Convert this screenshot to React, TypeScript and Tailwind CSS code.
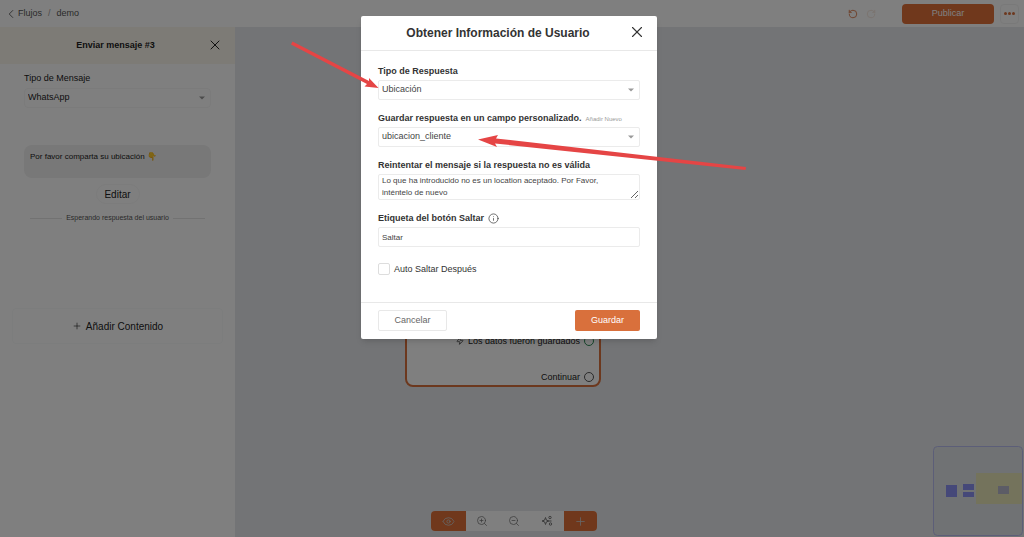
import { useState } from "react";
import { ChevronLeft, Eye, Info, Plus, RotateCcw, RotateCw, X, Zap, ZoomIn, ZoomOut } from "lucide-react";

function Caret() {
  return (
    <svg viewBox="0 0 6 4" className="pointer-events-none absolute right-1.5 top-2 h-1 w-1.5 fill-[#999]">
      <path d="M0 0.5h6L3 3.5z" />
    </svg>
  );
}

function ArrangeIcon() {
  return (
    <svg viewBox="0 0 12 12" className="size-3 fill-none stroke-current">
      <path d="M4.500 2.500L5.400 5.100L8 6L5.400 6.900L4.500 9.500L3.600 6.900L1 6L3.600 5.100Z" strokeLinejoin="round" />
      <circle cx="9" cy="2.500" r="1.200" />
      <circle cx="9.500" cy="9" r="1.200" />
      <path d="M8 6h2.500" />
    </svg>
  );
}

function Header() {
  return (
    <header className="flex h-[27px] shrink-0 items-center justify-between bg-white pl-1 pr-[5px]">
      <nav className="flex items-center gap-1.5 text-[9px] text-[#555]">
        <a href="#flujos" className="flex items-center">
          <ChevronLeft size={14} strokeWidth={1.5} />
          Flujos
        </a>
        <span className="text-[#999]">/</span>
        <a href="#demo">demo</a>
      </nav>
      <div className="flex items-center">
        <button aria-label="Deshacer" className="text-[#d9703c]">
          <RotateCcw size={10} />
        </button>
        <button aria-label="Rehacer" className="ml-2 mr-[26px] text-[#f3e3d8]" disabled>
          <RotateCw size={10} />
        </button>
        <button className="h-5 w-[92px] rounded-sm bg-[#e07038] text-[9px] text-white">Publicar</button>
        <button aria-label="Más" className="ml-1.5 flex h-5 w-[19px] items-center justify-center gap-px rounded-sm border border-[#f2f2f2]">
          <span className="size-[3px] rounded-full bg-[#d9703c]" />
          <span className="size-[3px] rounded-full bg-[#d9703c]" />
          <span className="size-[3px] rounded-full bg-[#d9703c]" />
        </button>
      </div>
    </header>
  );
}

function Sidebar() {
  return (
    <aside className="flex w-[235px] shrink-0 flex-col bg-white text-[#222]">
      <div className="relative flex h-[37px] items-center justify-center bg-[#faf6ec] pr-1">
        <h2 className="text-[9px] font-bold">Enviar mensaje #3</h2>
        <button aria-label="Cerrar panel" className="absolute right-3 top-2.5">
          <X size={16} strokeWidth={1.5} />
        </button>
      </div>
      <div className="px-6 pt-1.5">
        <label htmlFor="channel" className="block text-[9px] leading-4">
          Tipo de Mensaje
        </label>
        <div className="relative mt-0.5">
          <select id="channel" className="block h-5 w-full appearance-none rounded-sm border border-[#f6f6f6] px-[3px] text-[9px]">
            <option>WhatsApp</option>
          </select>
          <Caret />
        </div>
        <div className="mt-[37px] h-[33px] rounded-lg bg-[#f0f0f0] px-1.5 py-1 text-[8px] leading-4">
          Por favor comparta su ubicación <span>👇</span>
        </div>
        <button className="mx-auto mt-1.5 block h-5 w-11 rounded-full border border-[#f8f8f8] text-[10px]">Editar</button>
        <div className="mt-2 flex items-center justify-center gap-1 text-[7px] leading-3 text-[#555]">
          <span className="h-px w-8 bg-[#e4e4e4]" />
          Esperando respuesta del usuario
          <span className="h-px w-8 bg-[#e4e4e4]" />
        </div>
      </div>
      <button className="mx-3 mt-[84px] flex h-9 items-center justify-center gap-1 rounded border border-[#f9fbfb] text-[10px]">
        <Plus size={10} strokeWidth={1.5} />
        Añadir Contenido
      </button>
    </aside>
  );
}

function Canvas() {
  return (
    <main className="relative flex-1 bg-[#e6e9ec]">
      <section className="absolute left-[170px] top-[253px] flex h-[107px] w-[196px] flex-col items-end gap-5 rounded-lg border-2 border-[#d9703c] bg-white px-[5px] pt-[51px] text-[9px] leading-4 text-[#222]">
        <div className="flex items-center gap-1">
          <Zap size={8} />
          Los datos fueron guardados
          <span className="size-2.5 rounded-full border border-[#2e8b57]" />
        </div>
        <div className="flex items-center gap-1">
          Continuar
          <span className="size-2.5 rounded-full border border-[#555]" />
        </div>
      </section>

      <div className="absolute bottom-1.5 left-[196px] flex h-5 overflow-hidden rounded-sm bg-white text-[#777]">
        <button aria-label="Ver" className="flex w-[35px] items-center justify-center bg-[#e07038] text-[#ccc]">
          <Eye size={13} strokeWidth={1.5} />
        </button>
        <button aria-label="Acercar" className="flex w-8 items-center justify-center">
          <ZoomIn size={12} strokeWidth={1.5} />
        </button>
        <button aria-label="Alejar" className="flex w-8 items-center justify-center">
          <ZoomOut size={12} strokeWidth={1.5} />
        </button>
        <button aria-label="Ordenar" className="flex w-[34px] items-center justify-center">
          <ArrangeIcon />
        </button>
        <button aria-label="Añadir" className="flex w-[33px] items-center justify-center bg-[#e07038] text-[#ccc]">
          <Plus size={13} strokeWidth={1.5} />
        </button>
      </div>

      <svg viewBox="0 0 90 90" className="absolute bottom-px right-px size-[90px]">
        <rect x="0.5" y="0.5" width="89" height="89" rx="4" fill="#e0e4e8" stroke="#b9bdf0" />
        <rect x="43" y="27" width="46" height="31" fill="#e8e6b8" />
        <rect x="13" y="39" width="11" height="12" fill="#8a90f2" />
        <rect x="30" y="38" width="11" height="6" fill="#8a90f2" />
        <rect x="30" y="46" width="11" height="5" fill="#8a90f2" />
        <rect x="65" y="40" width="11" height="8" fill="#b9b9cc" />
      </svg>
    </main>
  );
}

const control = "block w-full rounded-xs border border-[#ebebeb] bg-white pl-[3px] text-[#444] outline-none";
const labelText = "mb-px block text-[9px] font-bold leading-4";

function UserInfoDialog() {
  const [retry, setRetry] = useState(
    "Lo que ha introducido no es un location aceptado. Por Favor, inténtelo de nuevo"
  );
  const [skipLabel, setSkipLabel] = useState("Saltar");

  return (
    <div role="dialog" aria-labelledby="dialog-title" className="w-[296px] rounded-xs bg-white text-[#333] shadow-md">
      <div className="relative flex h-[35px] items-center justify-center border-b border-[#e8e8e8] pr-[22px]">
        <h1 id="dialog-title" className="text-[12px] font-bold">
          Obtener Información de Usuario
        </h1>
        <button aria-label="Cerrar" className="absolute right-[11px] top-[7px]">
          <X size={18} strokeWidth={1.5} />
        </button>
      </div>

      <form className="flex flex-col gap-2.5 px-[17px] pb-[27px] pt-3">
        <div>
          <label htmlFor="type" className={labelText}>
            Tipo de Respuesta
          </label>
          <div className="relative">
            <select id="type" className={`${control} h-5 appearance-none text-[9px]`}>
              <option>Ubicación</option>
            </select>
            <Caret />
          </div>
        </div>
        <div>
          <div className="flex items-center gap-1">
            <label htmlFor="field" className={labelText}>
              Guardar respuesta en un campo personalizado.
            </label>
            <a href="#nuevo" className="text-[6px] leading-4 text-[#999]">
              Añadir Nuevo
            </a>
          </div>
          <div className="relative">
            <select id="field" className={`${control} h-5 appearance-none text-[9px]`}>
              <option>ubicacion_cliente</option>
            </select>
            <Caret />
          </div>
        </div>
        <div>
          <label htmlFor="retry" className={labelText}>
            Reintentar el mensaje si la respuesta no es válida
          </label>
          <textarea
            id="retry"
            value={retry}
            onChange={(e) => setRetry(e.target.value)}
            className={`${control} h-[26px] overflow-hidden pr-4 text-[8px] leading-3`}
          />
        </div>
        <div>
          <div className="flex items-center gap-1">
            <label htmlFor="skip" className={labelText}>
              Etiqueta del botón Saltar
            </label>
            <Info size={11} strokeWidth={1.5} />
          </div>
          <input
            id="skip"
            value={skipLabel}
            onChange={(e) => setSkipLabel(e.target.value)}
            className={`${control} h-5 text-[8px]`}
          />
        </div>
        <label className="mt-1.5 flex items-center gap-1 text-[9px] leading-3">
          <input type="checkbox" className="size-3 appearance-none rounded-xs border border-[#ddd] checked:bg-[#d9703c]" />
          Auto Saltar Después
        </label>
      </form>

      <div className="flex items-start justify-between border-t border-[#e8e8e8] px-[17px] pb-2 pt-[7px] text-[9px]">
        <button className="h-[21px] w-[69px] rounded-xs border border-[#e8e8e8] text-[#666]">Cancelar</button>
        <button className="h-[21px] w-[65px] rounded-xs bg-[#d9703c] text-white">Guardar</button>
      </div>
    </div>
  );
}

function Arrows() {
  return (
    <svg viewBox="0 0 1024 537" width="1024" height="537" className="pointer-events-none absolute left-0 top-0 fill-[#e54545]">
      <path d="M292.500 41.500L291 44.500L367 84L364.500 86.500L378.500 88L369 78L369 81Z" />
      <path d="M478 139.500L498 135L496 138.500L746 167L745.500 170L495 143.500L497 147Z" />
    </svg>
  );
}

export default function App() {
  return (
    <div className="relative flex h-screen flex-col overflow-hidden font-['Liberation_Sans',Arial,sans-serif]">
      <Header />
      <div className="flex min-h-0 flex-1">
        <Sidebar />
        <Canvas />
      </div>
      <div className="absolute inset-0 flex items-start justify-center bg-black/50 pr-1.5 pt-4">
        <UserInfoDialog />
      </div>
      <Arrows />
    </div>
  );
}
